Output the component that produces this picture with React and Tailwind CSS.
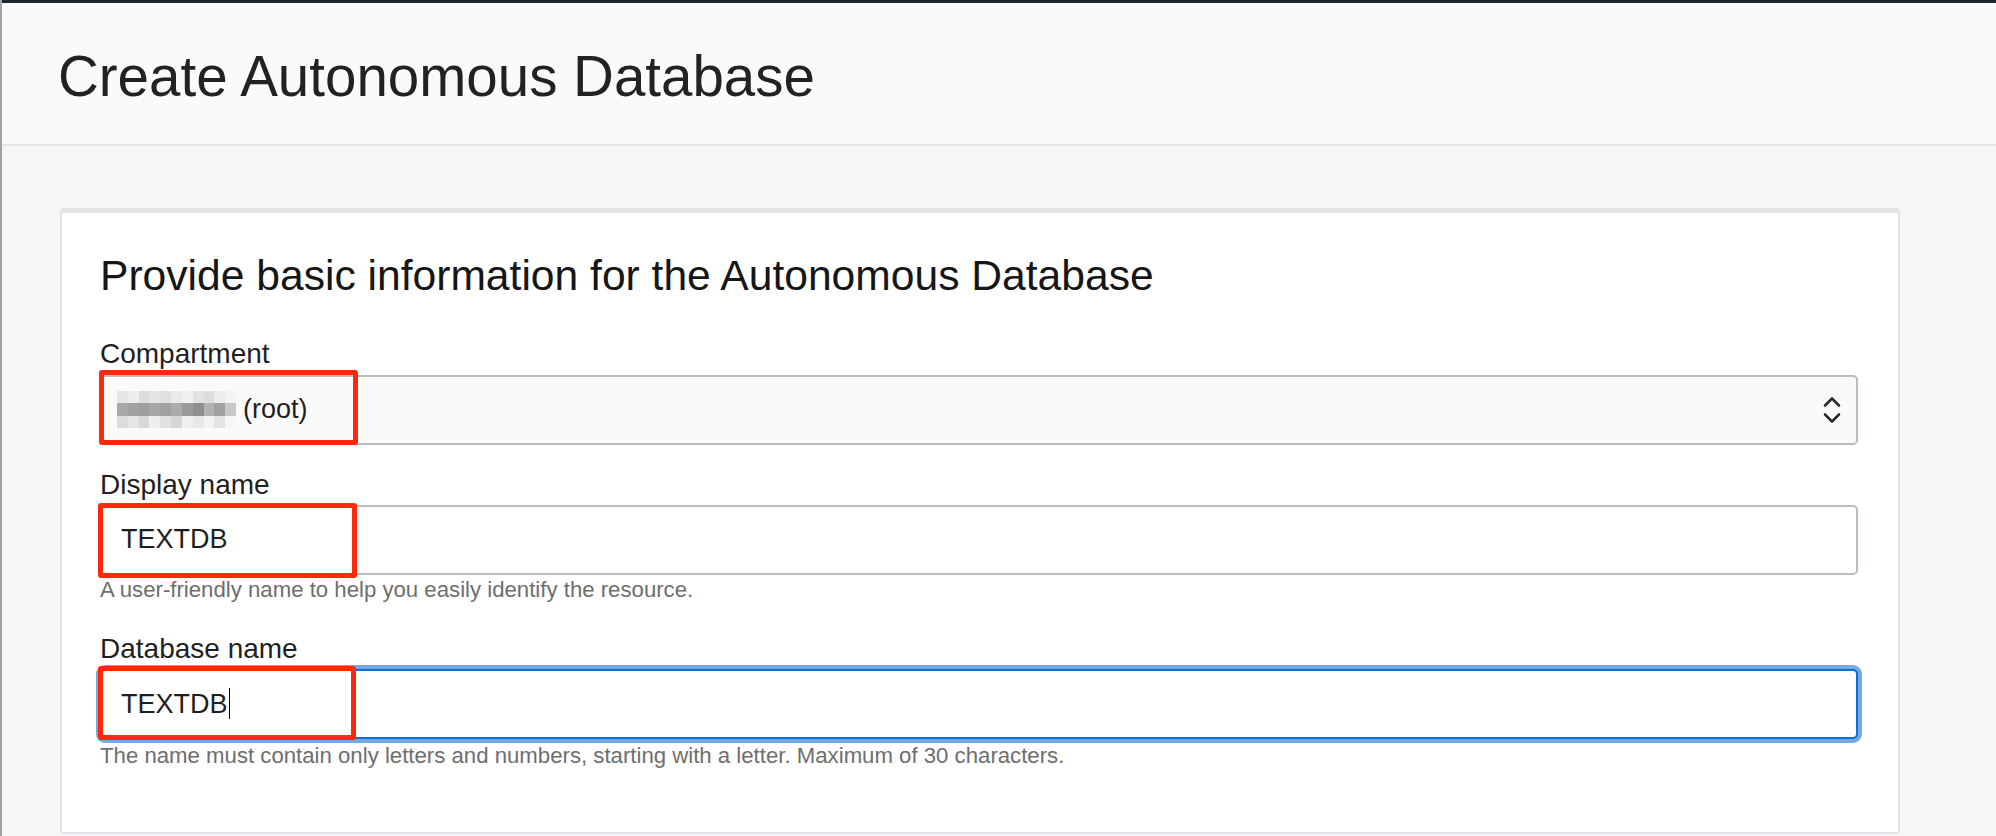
import React from "react";

const font = { fontFamily: '"Liberation Sans", Arial, sans-serif' };

// pixelated blur over the compartment name
const blurRows = [
  ["bg-[#e6e6e6]", "bg-[#eeeeee]", "bg-[#dcdcdc]", "bg-[#e4e4e4]", "bg-[#e0e0e0]", "bg-[#eaeaea]", "bg-[#f0f0f0]", "bg-[#e2e2e2]", "bg-[#dddddd]", "bg-[#ececec]", "bg-[#f4f4f4]"],
  ["bg-[#a9a9a9]", "bg-[#a2a2a2]", "bg-[#9e9e9e]", "bg-[#a6a6a6]", "bg-[#a0a0a0]", "bg-[#ababab]", "bg-[#9a9a9a]", "bg-[#8e8e8e]", "bg-[#b2b2b2]", "bg-[#a0a0a0]", "bg-[#c8c8c8]"],
  ["bg-[#dcdcdc]", "bg-[#e6e6e6]", "bg-[#d8d8d8]", "bg-[#eeeeee]", "bg-[#e2e2e2]", "bg-[#d6d6d6]", "bg-[#f0f0f0]", "bg-[#e8e8e8]", "bg-[#f2f2f2]", "bg-[#e4e4e4]", "bg-[#f6f6f6]"],
];

const Blurred = () => (
  <div className="grid grid-cols-11 grid-rows-3 w-[119px] h-[37px]">
    {blurRows.flat().map((c, i) => (
      <div key={i} className={c} />
    ))}
  </div>
);

const Chevrons = () => (
  <svg width="18" height="30" viewBox="0 0 18 30" fill="none" stroke="#2b2b2b" strokeWidth="2.6" strokeLinecap="round" strokeLinejoin="round">
    <polyline points="2,10.5 9,3.5 16,10.5" />
    <polyline points="2,19.5 9,26.5 16,19.5" />
  </svg>
);

// red annotation box laid over a field
const Marker = ({ className }) => (
  <div className={`absolute pointer-events-none border-[5px] border-[#fc2a0a] rounded-[3px] ${className}`} />
);

const Label = ({ children, className = "" }) => (
  <div className={`text-[28px] leading-none text-[#1f1f1f] ${className}`}>{children}</div>
);

const Help = ({ children, className = "" }) => (
  <div className={`text-[22.2px] leading-none text-[#6e6e6e] ${className}`}>{children}</div>
);

export default function App() {
  return (
    <div style={font} className="min-h-screen bg-[#f6f6f6] border-l-2 border-[#a2a2a2]">
      <div className="h-[3px] bg-[#1c2631]" />

      {/* Page header */}
      <div className="h-[143px] bg-[#fafafa] border-b-2 border-[#e6e6e6] pl-[56px] pt-[46px]">
        <h1 className="text-[56.5px] leading-none text-[#222222]">Create Autonomous Database</h1>
      </div>

      {/* Form card */}
      <div className="pt-[62px] pl-[58px]">
        <div className="w-[1840px] bg-white border-2 border-t-[5px] border-[#e3e4e8] rounded-[4px] pl-[38px] pr-[40px] pt-[41px] pb-[65px]">
          <h2 className="text-[42.6px] leading-none text-[#161616]">
            Provide basic information for the Autonomous Database
          </h2>

          <Label className="mt-[43px]">Compartment</Label>
          <div className="relative mt-[7px]">
            <div className="h-[70px] bg-[#fafafa] border-2 border-[#b8bcc4] rounded-[5px] pl-[15px] pr-[15px] flex items-center justify-between">
              <div className="flex items-center">
                <Blurred />
                <span className="ml-[7px] text-[27px] text-[#1f1f1f]">(root)</span>
              </div>
              <Chevrons />
            </div>
            <Marker className="-left-[1px] -top-[5px] w-[259px] h-[75px]" />
          </div>

          <Label className="mt-[26px]">Display name</Label>
          <div className="relative mt-[6px]">
            <div className="h-[70px] bg-white border-2 border-[#b8bcc4] rounded-[5px] pl-[19px] flex items-center">
              <span className="text-[27px] text-[#1f1f1f]">TEXTDB</span>
            </div>
            <Marker className="-left-[2px] -top-[2px] w-[259px] h-[75px]" />
          </div>
          <Help className="mt-[4px]">A user-friendly name to help you easily identify the resource.</Help>

          <Label className="mt-[34px]">Database name</Label>
          <div className="relative mt-[6px]">
            <div className="h-[70px] bg-white border-2 border-[#0b6fd5] ring-4 ring-[#76a8e2] rounded-[5px] pl-[19px] flex items-center">
              <span className="text-[27px] text-[#1f1f1f]">TEXTDB</span>
              <span className="ml-[1px] w-px h-[31px] bg-black" />
            </div>
            <Marker className="-left-[2px] -top-[3px] w-[258px] h-[74px]" />
          </div>
          <Help className="mt-[6px]">
            The name must contain only letters and numbers, starting with a letter. Maximum of 30 characters.
          </Help>
        </div>
      </div>
    </div>
  );
}
